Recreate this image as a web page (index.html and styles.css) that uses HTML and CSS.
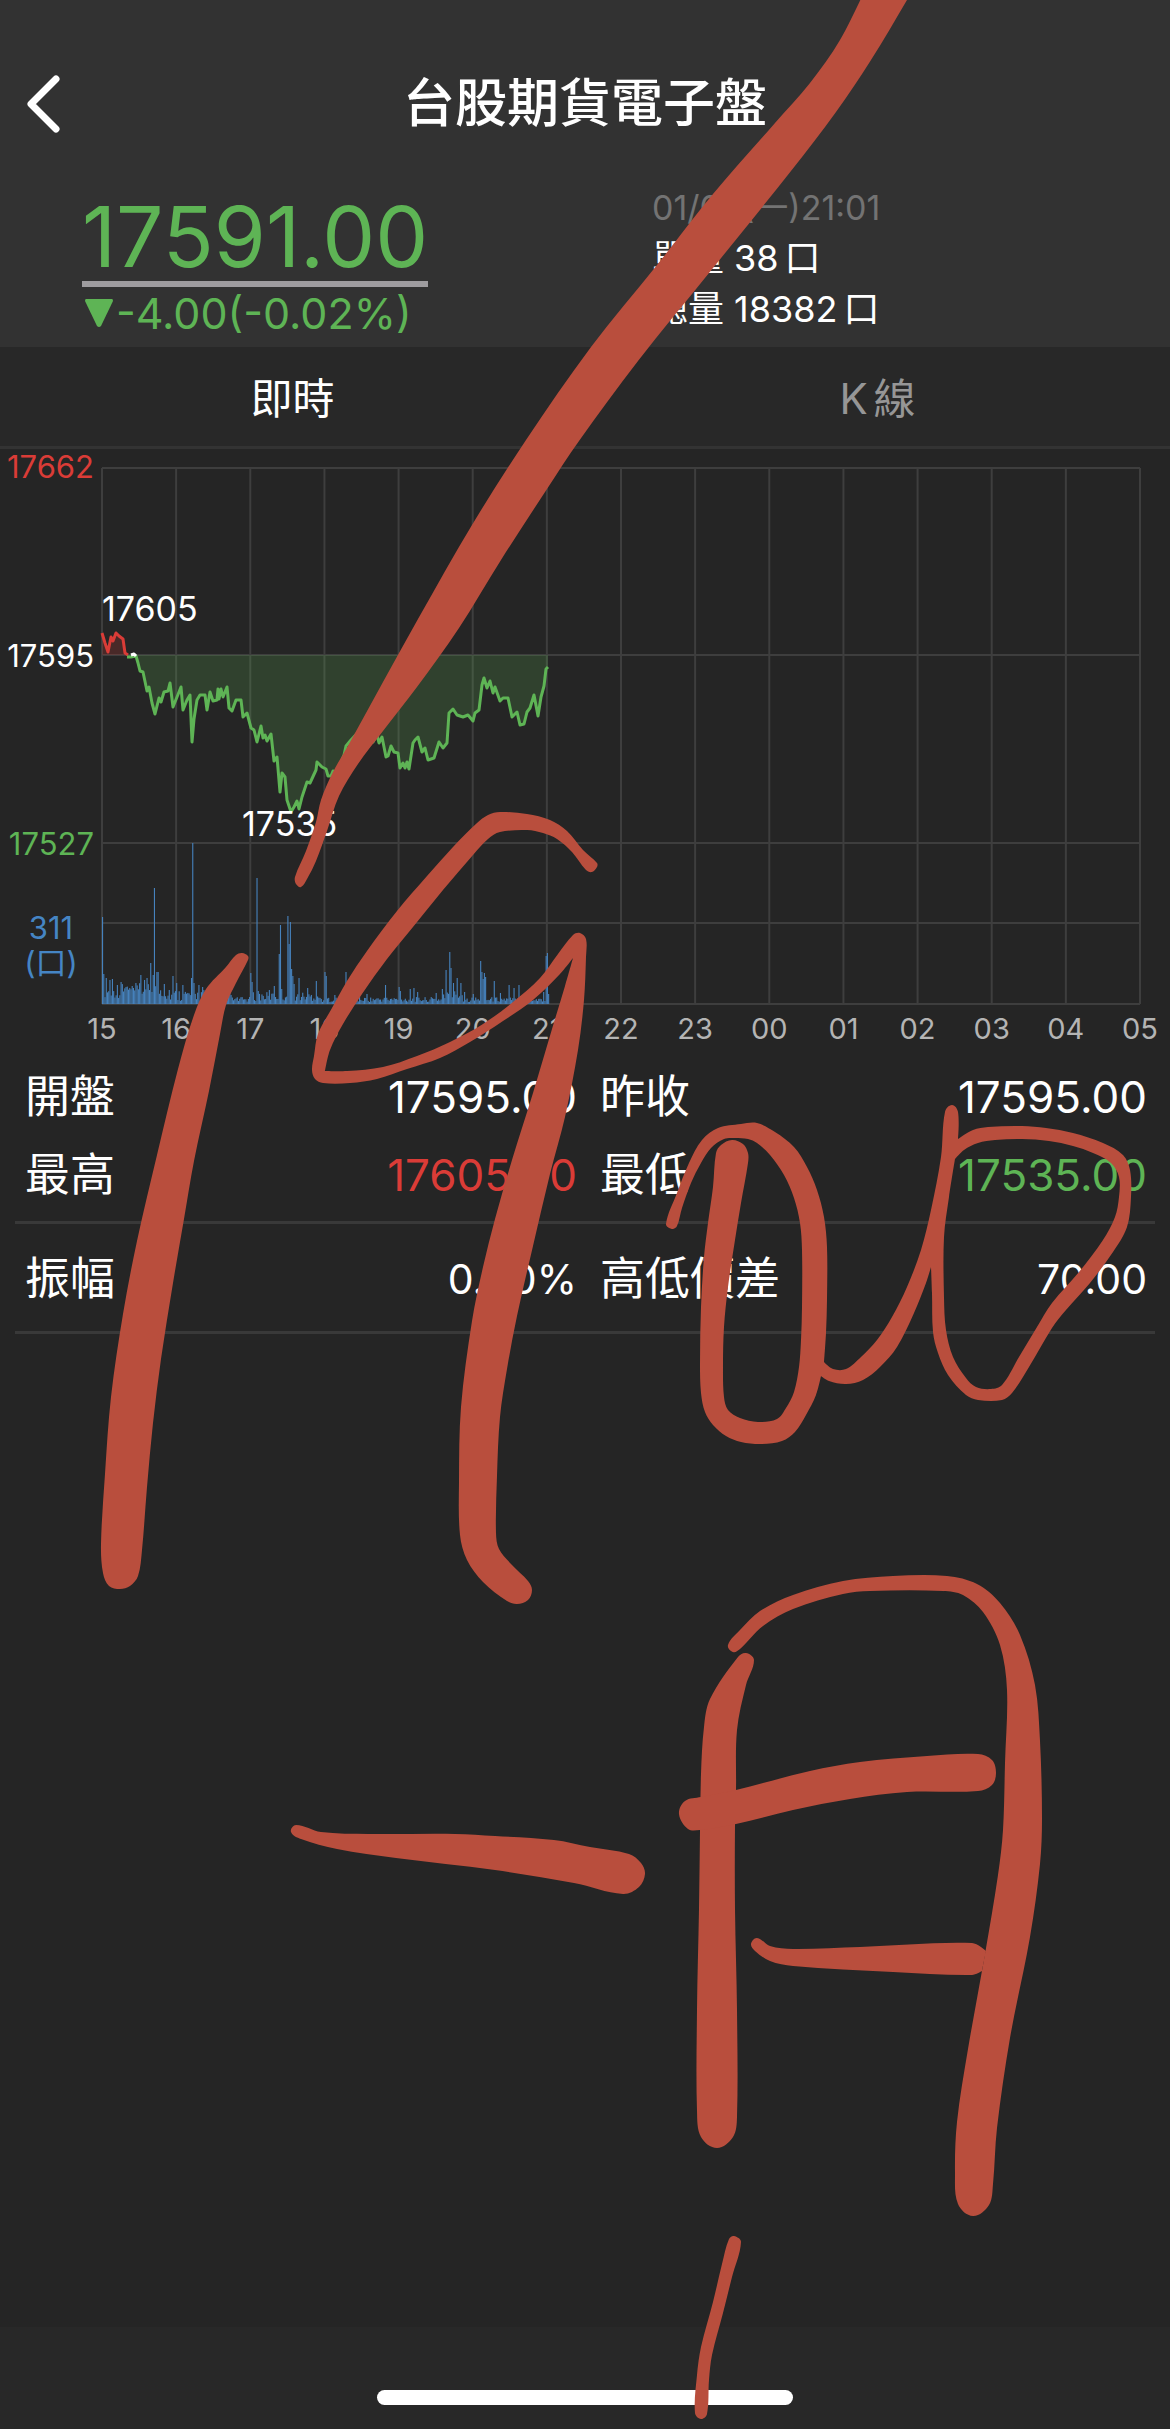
FILE: index.html
```
<!DOCTYPE html>
<html lang="zh-Hant">
<head>
    <meta charset="utf-8">
    <meta name="viewport" content="width=device-width, initial-scale=1">
    <title>台股期貨電子盤</title>
    <link rel="stylesheet" href="styles.css">
</head>
<body>
<div class="page">
    <header class="top">
        <div class="title-bar">
            <button class="back" aria-label="返回">
                <svg width="34" height="58" viewBox="0 0 34 58"><path d="M30 4 L5 29 L30 54"/></svg>
            </button>
            <h1>台股期貨電子盤</h1>
        </div>
        <div class="quote">
            <div class="quote-main">
                <div class="price">17591.00</div>
                <div class="change">
                    <svg width="28" height="28" viewBox="0 0 28 28"><path d="M1 0 H27 Q28 0 28 2 L16 27 Q14 29 12 27 L0 2 Q0 0 1 0 Z"/></svg>
                    <span>-4.00(-0.02%)</span>
                </div>
            </div>
            <div class="quote-info">
                <div class="time">01/03(一)21:01</div>
                <div>單量 38<span class="unit">口</span></div>
                <div>總量 18382<span class="unit">口</span></div>
            </div>
        </div>
    </header>

    <nav class="tabs">
        <button class="tab active">即時</button>
        <button class="tab">K<span class="unit">線</span></button>
    </nav>

    <svg class="chart" viewBox="0 0 1170 609">
        <g id="grid" class="grid"></g>
        <g id="volume" class="volume"></g>
        <path id="area-up" class="area-up"/>
        <path id="area-down" class="area-down"/>
        <path id="line-up" class="line line-up"/>
        <path id="line-down" class="line line-down"/>
        <path class="line line-flat" d="M131 206 L134 205 L136 207"/>
        <g class="scale">
            <text class="up" x="94" y="29">17662</text>
            <text x="94" y="218">17595</text>
            <text class="down" x="94" y="406">17527</text>
        </g>
        <g class="vol-scale">
            <text x="51" y="490">311</text>
            <text x="51" y="525">(口)</text>
        </g>
        <g class="mark">
            <text x="102" y="172">17605</text>
            <text x="242" y="387">17535</text>
        </g>
        <g id="hours" class="hours"></g>
    </svg>

    <table class="stats">
        <colgroup><col class="c1"><col class="c2"><col class="c3"><col class="c4"></colgroup>
        <tr>
            <th>開盤</th><td>17595.00</td>
            <th>昨收</th><td>17595.00</td>
        </tr>
        <tr class="line-row">
            <th>最高</th><td class="up">17605.00</td>
            <th>最低</th><td class="down">17535.00</td>
        </tr>
        <tr class="last-row">
            <th>振幅</th><td>0.40%</td>
            <th>高低價差</th><td>70.00</td>
        </tr>
    </table>

    <footer class="bottom"><div class="home-bar"></div></footer>

    <svg id="pen" class="pen" viewBox="0 0 1170 2429" aria-hidden="true"></svg>
</div>
<script src="script.js"></script>
</body>
</html>
```
FILE: styles.css
```
* {
    box-sizing: border-box;
}
body {
    margin: 0;
    background-color: #252525;
    color: #ffffff;
    font-family: Inter, "Noto Sans CJK TC", sans-serif;
}
button {
    padding: 0;
    border: none;
    background: none;
    color: inherit;
    font: inherit;
    cursor: pointer;
}
.page {
    position: relative;
    display: flex;
    flex-direction: column;
    min-height: 100vh;
    overflow: hidden;
}
.top {
    padding-top: 68px;
    padding-bottom: 8px;
    background-color: #323232;
}
.title-bar {
    display: grid;
    grid-template-columns: 1fr auto 1fr;
    align-items: center;
    height: 72px;
    margin-bottom: 41px;
}
.back {
    display: flex;
    justify-self: start;
    margin-left: 26px;
}
.back path {
    fill: none;
    stroke: #ffffff;
    stroke-width: 7;
    stroke-linecap: round;
    stroke-linejoin: round;
}
h1 {
    margin: 0;
    font-size: 52px;
    font-weight: 500;
    line-height: 72px;
}
.quote {
    display: grid;
    grid-template-columns: 570fr 518fr;
    padding-left: 7%;
}
.quote-main {
    padding-top: 12px;
    color: #5eb455;
}
.price {
    width: fit-content;
    border-bottom: 6px solid #9e9c9f;
    font-size: 84px;
    line-height: 88px;
}
.change {
    display: flex;
    align-items: center;
    gap: 3px;
    padding-left: 3px;
    font-size: 43px;
    line-height: 52px;
}
.change path {
    fill: #5eb455;
}
.quote-info {
    padding-top: 1px;
    font-size: 36px;
    line-height: 51px;
}
.unit {
    margin-left: 6px;
}
.time {
    color: #737373;
    font-size: 34px;
}
.tabs {
    display: flex;
    height: 102px;
    border-bottom: 3px solid #333333;
    background-color: #282828;
}
.tab {
    flex: 1;
    padding-bottom: 3px;
    color: #969696;
    font-size: 42px;
}
.tab.active {
    color: #ffffff;
}
.up {
    color: #da3c37;
    fill: #da3c37;
}
.down {
    color: #5eb455;
    fill: #5eb455;
}
.chart {
    display: block;
    width: 100%;
    fill: #ffffff;
    font-size: 31px;
}
.grid path {
    fill: none;
    stroke: #3e3e3e;
    stroke-width: 2;
}
.volume {
    fill: #4682bd;
}
.area-up {
    fill: rgba(218, 60, 55, 0.2);
}
.area-down {
    fill: rgba(94, 180, 85, 0.2);
}
.line {
    fill: none;
    stroke-width: 3;
    stroke-linejoin: round;
}
.line-up {
    stroke: #da3c37;
}
.line-down {
    stroke: #5eb455;
}
.line-flat {
    stroke: #ffffff;
}
.scale {
    text-anchor: end;
}
.vol-scale {
    fill: #4585c4;
    text-anchor: middle;
}
.mark {
    font-size: 34px;
}
.hours {
    fill: #b4b4b4;
    font-size: 29px;
    text-anchor: middle;
}
.stats {
    align-self: center;
    width: calc(100% - 30px);
    border-collapse: collapse;
    table-layout: fixed;
    font-size: 44px;
    line-height: 60px;
}
.c1 {
    width: 16%;
}
.c2 {
    width: 34%;
}
.c3 {
    width: 19%;
}
.stats th {
    padding: 9px 0 9px 10px;
    font-size: 45px;
    font-weight: 400;
    text-align: left;
    white-space: nowrap;
}
.stats th:nth-child(3) {
    padding-left: 15px;
}
.stats td {
    padding: 9px 8px 9px 0;
    text-align: right;
}
.stats .line-row > * {
    padding-bottom: 16px;
    border-bottom: 3px solid #393939;
}
.stats .last-row > * {
    padding-top: 25px;
    padding-bottom: 22px;
    border-bottom: 3px solid #393939;
}
.stats .last-row td {
    font-size: 41px;
}
.bottom {
    display: flex;
    justify-content: center;
    height: 102px;
    margin-top: auto;
    padding-top: 63px;
    background-color: #282828;
}
.home-bar {
    width: 416px;
    height: 15px;
    border-radius: 8px;
    background-color: #ffffff;
}
.pen {
    position: absolute;
    top: 0;
    left: 0;
    width: 100%;
    fill: #b94e3d;
    fill-rule: evenodd;
    pointer-events: none;
}
```
FILE: script.js
```
const NS = "http://www.w3.org/2000/svg";
const LEFT = 102, RIGHT = 1140, TOP = 19, BASE = 206, LOW = 394, VOL = 474, BOTTOM = 555;
const HOUR = (RIGHT - LEFT) / 14;

function add(parent, name, attrs, text) {
    const el = document.createElementNS(NS, name);
    for (const key in attrs) el.setAttribute(key, attrs[key]);
    if (text) el.textContent = text;
    document.getElementById(parent).appendChild(el);
}

// grid and hour labels
[TOP, BASE, LOW, VOL, BOTTOM].forEach(y => add("grid", "path", { d: `M${LEFT} ${y}H${RIGHT}` }));
for (let i = 0; i <= 14; i++) {
    const x = LEFT + i * HOUR;
    add("grid", "path", { d: `M${x} ${TOP}V${BOTTOM}` });
    add("hours", "text", { x: x, y: 590 }, String((15 + i) % 24).padStart(2, "0"));
}

// volume, one bar per minute; peaks are listed, the rest is low background trading
const peaks = {
    0: 87, 1: 30, 3: 26, 6: 24, 8: 25, 12: 19, 15: 22, 19: 17, 24: 18, 31: 29, 34: 24, 36: 26, 39: 41,
    41: 29, 42: 116, 44: 32, 45: 32, 50: 20, 54: 14, 57: 28, 60: 21, 65: 19, 72: 26, 73: 161, 74: 21,
    78: 19, 81: 17, 120: 31, 121: 22, 125: 126, 126: 13, 135: 14, 139: 18, 143: 50, 144: 79, 145: 15,
    150: 88, 151: 60, 152: 82, 153: 35, 154: 28, 155: 20, 159: 26, 166: 16, 173: 23, 180: 32, 181: 28,
    188: 9, 197: 32, 214: 10, 229: 19, 240: 17, 241: 13, 249: 15, 252: 16, 255: 12, 270: 11, 275: 15,
    278: 34, 281: 52, 282: 36, 284: 21, 287: 26, 290: 21, 293: 12, 300: 10, 306: 43, 307: 32, 308: 25,
    309: 31, 310: 27, 317: 23, 322: 11, 329: 19, 333: 16, 337: 19, 357: 12, 359: 48, 360: 51, 361: 10
};
for (let m = 0; m <= 361; m++) {
    const r = Math.abs(Math.sin(m * 12.9898) * 43758.5453) % 1;
    let h = 2 + r * 5;
    if (m < 52) h = 6 + r * 15;
    else if (m < 105) h = 3 + r * 12;
    else if (m > 120 && m < 176) h = 3 + r * 9;
    else if (m > 275 && m < 292) h = 4 + r * 10;
    h = peaks[m] || h;
    add("volume", "rect", { x: LEFT + m * HOUR / 60, y: BOTTOM - h, width: 1.1, height: h });
}

// price line
const up = "102,184 105,194 108,203 111,188 113,192 116,184 119,187 123,190 125,204 128,206";
const down = "127,208 131,208 136,207 138,214 140,222 143,223 147,242 149,238 152,254 155,265 159,249 161,253 " +
    "164,243 168,242 170,234 173,258 177,248 181,238 183,261 187,251 190,246 192,293 194,270 197,251 200,246 " +
    "205,246 207,261 210,243 213,252 217,251 218,240 219,250 221,240 223,248 227,238 229,259 232,262 236,251 " +
    "241,251 243,268 247,264 251,279 254,281 257,293 261,277 263,289 265,286 267,292 271,285 274,312 277,308 " +
    "280,343 282,324 285,328 287,351 291,363 294,358 297,352 299,360 302,348 307,333 310,334 316,321 317,313 " +
    "322,318 326,320 328,327 331,327 333,322 335,328 344,306 346,297 351,291 363,278 373,293 377,286 379,294 " +
    "382,288 386,308 388,307 391,297 394,303 398,304 400,319 403,314 405,319 407,313 409,320 413,294 415,291 " +
    "418,288 422,303 425,299 428,311 434,309 439,293 443,299 447,294 449,264 453,260 457,266 463,268 468,266 " +
    "473,272 475,264 479,261 482,236 484,229 487,239 490,232 493,244 495,238 500,252 503,249 508,249 512,268 " +
    "517,263 520,276 524,275 527,263 530,259 534,246 538,267 541,248 544,237 546,220 548,218";
document.getElementById("line-up").setAttribute("d", "M" + up);
document.getElementById("line-down").setAttribute("d", "M" + down);
document.getElementById("area-up").setAttribute("d", `M102,${BASE} ${up} 128,${BASE}Z`);
document.getElementById("area-down").setAttribute("d", `M127,${BASE} ${down} 548,${BASE}Z`);

// hand drawn marks, each one is an outline smoothed through its points, "!" keeps a sharp corner
const strokes = [
    ["865,-10! 840,40 810,83 775,123 713,194 657,265 591,347 526,440 472,525 418,619 383,682 349,744 333,772 321,800 316,822 306,851 295,877 296,884 301,887 307,879 316,861 327,831 339,796 358,764 383,731 417,687 459,628 501,560 547,489 579,441 638,361 709,273 791,171 836,112 871,60 907,0 912,-10!"],
    ["242,953 248,956 248,960 236,983 226,1005 220,1034 209,1091 194,1161 184,1219 173,1283 161,1359 153,1423 147,1487 142,1550 138,1576 130,1586 120,1589 109,1586 103,1573 101,1544 105,1474 111,1397 123,1314 137,1241 157,1155 178,1069 194,1015 206,989 226,967 236,955"],
    ["597,867 592,872 586,870 572,852 557,839 543,833 527,830 500,832 488,839 473,855 443,890 413,927 387,959 362,994 343,1024 330,1050 325,1071! 347,1071 383,1067 417,1056 450,1042 483,1024 513,1002 540,978 558,954 573,935 580,933 586,939 586,957 584,1000 578,1050 565,1117 550,1174 533,1246 517,1316 507,1369 500,1417 497,1476 496,1533 499,1549 512,1565 528,1581 532,1590 528,1600 517,1604 507,1601 483,1582 467,1560 460,1535 459,1482 461,1407 472,1321 483,1267 495,1219 512,1160 533,1093 552,1029 565,986 573,958! 560,974 533,1000 503,1021 470,1042 440,1058 407,1069 377,1079 350,1083 323,1083 315,1079 312,1070 314,1056 318,1034 332,1008 347,981 367,951 397,911 427,876 453,847 477,823 488,815 500,812 527,814 550,820 567,831 583,850 597,863"],
    ["666,1224 672,1229 677,1226 682,1208 691,1183 701,1163 711,1148 724,1139 735,1138 748,1139 757,1143 770,1155 784,1175 794,1198 800,1223 802,1250 802,1307 801,1340 799,1367 794,1392 786,1408 777,1419 758,1422 740,1418 728,1410 724,1397 723,1367 724,1327 728,1287 735,1240 741,1203 748,1163 748,1153 743,1144 732,1140 721,1145 716,1153 713,1187 708,1223 704,1257 701,1307 700,1363 701,1393 705,1412 713,1425 726,1436 741,1442 762,1444 782,1441 795,1432 806,1415 816,1395 821,1376! 829,1381 846,1384 863,1380 880,1367 897,1347 914,1313 926,1283 931,1267! 932,1293 933,1332 938,1353 948,1375 966,1395 978,1400 1002,1400 1012,1393 1029,1367 1052,1328 1066,1310 1090,1283 1113,1252 1127,1227 1131,1197 1130,1170 1123,1155 1103,1143 1073,1133 1046,1128 1022,1126 988,1127 973,1130 958,1139! 958,1112 952,1105 945,1112 941,1157 931,1210 921,1250 907,1287 892,1317 877,1340 861,1357 846,1369 833,1369 824,1362! 826,1333 827,1300 827,1247 824,1217 817,1190 807,1167 794,1147 775,1132 757,1123 741,1124 718,1128 702,1140 689,1163 677,1193",
     "955,1159! 964,1150 978,1143 995,1140 1022,1139 1049,1141 1073,1146 1093,1153 1111,1163 1119,1177 1119,1197 1115,1217 1103,1240 1079,1272 1052,1303 1037,1327 1019,1357 1002,1385 991,1389 976,1387 966,1378 953,1357 946,1330 944,1297 944,1237 949,1197"],
    ["291,1832 296,1825 321,1832 368,1834 455,1834 495,1836 554,1840 590,1847 629,1854 641,1863 645,1874 639,1887 623,1894 574,1883 495,1870 396,1858 337,1849 301,1839"],
    ["738,1657 746,1653 754,1660 746,1685 737,1730 736,1790 735,1825 735,1909 737,2010 737,2117 733,2137 717,2148 701,2137 697,2111 697,2010 699,1909 700,1831 701,1774 704,1727 710,1699"],
    ["679,1814 685,1801 701,1797 736,1790 810,1771 860,1762 927,1756 978,1754 992,1760 996,1773 992,1785 978,1791 907,1792 850,1799 793,1810 736,1824 700,1830 688,1829"],
    ["751,1944 757,1938 770,1946 793,1949 860,1947 972,1943 986,1951! 982,1971! 972,1975 893,1972 793,1966 770,1961 755,1951"],
    ["728,1645 740,1630 760,1611 793,1595 843,1581 893,1576 947,1576 977,1584 1000,1603 1020,1635 1035,1685 1040,1741 1042,1819 1040,1864 1030,1937 1010,2038 997,2128 993,2184 989,2205 973,2216 958,2204 955,2173 957,2122 968,2049 985,1954 998,1875 1003,1830 1005,1763 1007,1690 1000,1645 983,1612 963,1595 943,1591 870,1591 843,1594 793,1609 763,1626 740,1649 733,1652"],
    ["729,2239 734,2236 741,2242 732,2277 723,2313 712,2355 709,2380 707,2414 701,2419 695,2413 697,2375 701,2347 713,2302 722,2264"]
];

function smooth(list) {
    const p = list.split(" ").map(s => s.split(",").map(parseFloat).concat(s.endsWith("!")));
    const n = p.length;
    let d = `M${p[0][0]},${p[0][1]}`;
    for (let i = 0; i < n; i++) {
        const a = p[(i + n - 1) % n], b = p[i], c = p[(i + 1) % n], e = p[(i + 2) % n];
        // handles follow the segment length, so short segments do not loop
        const len = Math.hypot(c[0] - b[0], c[1] - b[1]);
        const l1 = Math.hypot(c[0] - a[0], c[1] - a[1]) || 1;
        const l2 = Math.hypot(e[0] - b[0], e[1] - b[1]) || 1;
        const k1 = b[2] ? 0 : len / l1 / 3;
        const k2 = c[2] ? 0 : len / l2 / 3;
        d += `C${b[0] + (c[0] - a[0]) * k1},${b[1] + (c[1] - a[1]) * k1} ` +
            `${c[0] - (e[0] - b[0]) * k2},${c[1] - (e[1] - b[1]) * k2} ${c[0]},${c[1]}`;
    }
    return d + "Z";
}
strokes.forEach(s => add("pen", "path", { d: s.map(smooth).join("") }));
```
